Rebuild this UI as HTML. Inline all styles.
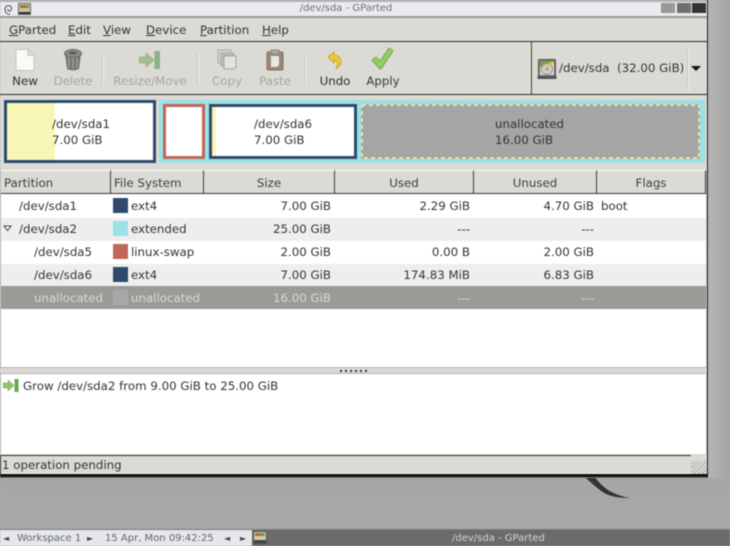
<!DOCTYPE html>
<html><head><meta charset="utf-8">
<style>
html,body{margin:0;padding:0;width:730px;height:546px;overflow:hidden;background:#a8a8a8;}
#p{position:relative;width:730px;height:546px;overflow:hidden;font-family:"DejaVu Sans",sans-serif;font-size:11.8px;color:#333331;filter:blur(0.5px);background:linear-gradient(#9a9a9a,#a9a9a9);}
.a{position:absolute;}
.t{position:absolute;white-space:nowrap;line-height:16px;}
.r{text-align:right;}
.c{text-align:center;}
u{text-decoration:underline;}
.d{color:#a5a5a0;}
.h{position:absolute;top:170px;height:24px;background:#dcdad5;border-right:1px solid #3a3a38;box-sizing:border-box;line-height:25px;text-align:center;color:#3f3f3d;border-top:1px solid #fff;box-shadow:inset 0 -1px 0 #3a3a38;}
.s{position:absolute;width:15px;height:15px;}
.sep{position:absolute;top:53px;height:32px;width:1px;background:#c6c4bf;border-right:1px solid #f2f1ee;}
</style></head><body><div id="p">

<!-- desktop swoosh -->
<svg class="a" style="left:580px;top:470px" width="60" height="35"><path d="M5 7 L15 7 Q26 24 50 28 Q30 28.5 20 20 Q11 13 5 7Z" fill="#333"/></svg>

<!-- window -->
<div class="a" style="left:0;top:0;width:708px;height:477px;background:#dcdad5;"></div>
<div class="a" style="left:707px;top:0;width:1px;height:477px;background:#1e1e1e;"></div>
<div class="a" style="left:708px;top:0;width:22px;height:478px;background:linear-gradient(90deg,#b5b5b5,#a5a5a5);"></div>
<div class="a" style="left:0;top:474px;width:708px;height:3px;background:#111;"></div>
<div class="a" style="left:0;top:477px;width:708px;height:1px;background:#777;"></div>

<!-- title bar -->
<div class="a" style="left:0;top:0;width:707px;height:2px;background:#b4b4b6;"></div>
<div class="a" style="left:0;top:2px;width:707px;height:14px;background:#e9eaef;"></div>
<div class="a" style="left:0;top:16px;width:707px;height:2px;background:#9b9b9b;"></div>
<svg class="a" style="left:2px;top:3px" width="12" height="13"><path d="M8 11.5 C4 11 2.5 8 3 5.5 C3.5 3 6 2 8 3 C10 4 10 7 8 8 C6.5 8.5 5.5 7.5 6 6" fill="none" stroke="#555" stroke-width="1"/></svg>
<svg class="a" style="left:18px;top:3px" width="13" height="12"><rect x="0" y="0" width="13" height="12" fill="#666"/><rect x="1" y="1" width="11" height="8" fill="#c9c7a0"/><rect x="2" y="2" width="5" height="3" fill="#c0603c"/><rect x="7" y="2" width="4" height="3" fill="#6a9a55"/><rect x="1" y="9" width="11" height="2" fill="#333"/></svg>
<div class="t c" style="left:0;top:1px;width:692px;font-size:10px;line-height:15px;color:#6e7072;">/dev/sda - GParted</div>
<div class="a" style="left:661px;top:3px;width:14px;height:10px;background:#989898;"></div>
<div class="a" style="left:677px;top:3px;width:14px;height:10px;background:#6e6e6e;"></div>
<div class="a" style="left:692px;top:3px;width:14px;height:10px;background:#333;"></div>

<!-- menu -->
<div class="a" style="left:0;top:41px;width:707px;height:1px;background:#2d2d2b;"></div>
<div class="t" style="left:9px;top:22px;"><u>G</u>Parted</div>
<div class="t" style="left:68px;top:22px;"><u>E</u>dit</div>
<div class="t" style="left:103px;top:22px;"><u>V</u>iew</div>
<div class="t" style="left:146px;top:22px;"><u>D</u>evice</div>
<div class="t" style="left:200px;top:22px;"><u>P</u>artition</div>
<div class="t" style="left:262px;top:22px;"><u>H</u>elp</div>

<!-- toolbar -->
<div class="a" style="left:0;top:94px;width:707px;height:1px;background:#2d2d2b;"></div>
<div class="a" style="left:531px;top:42px;width:1px;height:52px;background:#3a3a38;"></div>

<svg class="a" style="left:14px;top:48px" width="22" height="24"><path d="M2 1.5 H14 L20 7.5 V21 Q20 22.5 18.5 22.5 H3.5 Q2 22.5 2 21Z" fill="#f9f9f7" stroke="#c4c4bf"/><path d="M14 1.5 V7.5 H20" fill="#dededa" stroke="#c4c4bf"/></svg>
<div class="t c" style="left:5px;top:73px;width:40px;color:#2e2e2c;">New</div>

<svg class="a" style="left:62px;top:48px" width="22" height="24"><path d="M3 6 L5 21 Q11 24 17 21 L19 6Z" fill="#767672"/><path d="M7 9 V20 M11 9 V21 M15 9 V20" stroke="#a5a5a0" stroke-width="1.2"/><ellipse cx="11" cy="5.5" rx="8.5" ry="4" fill="#8a8a8a" stroke="#6a6a66"/><ellipse cx="11" cy="5" rx="4" ry="1.6" fill="#5e5e5a"/></svg>
<div class="t c d" style="left:48px;top:73px;width:50px;">Delete</div>

<div class="sep" style="left:102px;"></div>

<svg class="a" style="left:139px;top:50px" width="22" height="20"><path d="M0 7 H7 V3 L15 10 L7 17 V13 H0Z" fill="#a3bd95" stroke="#8aa47c" stroke-width=".6"/><rect x="15.5" y="1" width="5.5" height="18" fill="#8eb184"/></svg>
<div class="t c d" style="left:105px;top:73px;width:90px;">Resize/Move</div>

<div class="sep" style="left:197px;"></div>

<svg class="a" style="left:217px;top:49px" width="21" height="22"><rect x="1" y="1" width="13" height="13" fill="#d2d2ce" stroke="#aaa"/><rect x="4" y="4" width="13" height="13" fill="#bdbdb9" stroke="#aaa"/><path d="M7 7 H19 V18 L16 20 H7Z" fill="#e3e3e0" stroke="#a0a09c"/></svg>
<div class="t c d" style="left:207px;top:73px;width:40px;">Copy</div>

<svg class="a" style="left:266px;top:49px" width="19" height="22"><rect x="1" y="3" width="16" height="18" rx="1.5" fill="#9d8878" stroke="#85705f"/><rect x="5" y="1" width="8" height="4" fill="#a8a8a4" stroke="#888"/><path d="M5 7 H13 V16 L11 18 H5Z" fill="#e8e8e5"/></svg>
<div class="t c d" style="left:255px;top:73px;width:40px;">Paste</div>

<div class="sep" style="left:304px;"></div>

<svg class="a" style="left:327px;top:51px" width="16" height="19"><path d="M1 6 L7 1 V4 Q14 5 14 11 Q14 15 9 18 Q11 13 10 11 Q9 9 7 9 V12Z" fill="#edc92f" stroke="#c8a215" stroke-width=".8"/></svg>
<div class="t c" style="left:315px;top:73px;width:40px;color:#2e2e2c;">Undo</div>

<svg class="a" style="left:371px;top:47px" width="23" height="24"><path d="M1 13 L5 10 L9 14 L18 1 L22 4 L10 22 Q8 22 7 20Z" fill="#90cd64" stroke="#74a94f"/></svg>
<div class="t c" style="left:363px;top:73px;width:40px;color:#3a3a38;">Apply</div>

<!-- device combo -->
<svg class="a" style="left:537px;top:59px" width="20" height="21"><rect x="1.5" y="0.5" width="17" height="18" rx="1" fill="#777" stroke="#555"/><rect x="3" y="2" width="14" height="14" fill="#d8d8cc"/><path d="M3 2 H17 V4 L12 4 L9 7 L3 8Z" fill="#6fa54a"/><circle cx="10" cy="10" r="5.5" fill="#cfcfc6" stroke="#999"/><circle cx="10" cy="10" r="1.5" fill="#999"/><path d="M10 8 L16 2.5" stroke="#e8c42a" stroke-width="1.6"/><rect x="0.5" y="17" width="19" height="3" fill="#555"/></svg>
<div class="t" style="left:559px;top:60px;">/dev/sda&nbsp; (32.00 GiB)</div>
<div class="a" style="left:687px;top:46px;width:1px;height:45px;background:#c6c4bf;border-right:1px solid #f2f1ee;"></div>
<div class="a" style="left:691px;top:66px;width:0;height:0;border-left:5px solid transparent;border-right:5px solid transparent;border-top:5px solid #111;"></div>

<!-- partition visual -->
<div class="a" style="left:4px;top:100px;width:152px;height:63px;box-sizing:border-box;border:3px solid #2f4a6d;background:#fff;outline:1px solid #dcdad5;"></div>
<div class="a" style="left:7px;top:103px;width:48px;height:57px;background:#f8f6b4;"></div>
<div class="t" style="left:52px;top:116px;">/dev/sda1</div>
<div class="t" style="left:52px;top:132px;">7.00 GiB</div>

<div class="a" style="left:159px;top:100px;width:546px;height:63px;background:#9ae2e5;"></div>
<div class="a" style="left:163px;top:104px;width:42px;height:55px;box-sizing:border-box;border:3px solid #c1665a;background:#fff;"></div>
<div class="a" style="left:209px;top:104px;width:148px;height:55px;box-sizing:border-box;border:3px solid #2f4a6d;background:#fff;"></div>
<div class="a" style="left:212px;top:107px;width:4px;height:49px;background:#f8f6b4;"></div>
<div class="t" style="left:254px;top:116px;">/dev/sda6</div>
<div class="t" style="left:254px;top:132px;">7.00 GiB</div>
<div class="a" style="left:361px;top:104px;width:339px;height:55px;background:#a5a5a5;"></div>
<svg class="a" style="left:361px;top:104px" width="339" height="55"><rect x="1" y="1" width="337" height="53" fill="none" stroke="#f6f3a8" stroke-width="1.5" stroke-dasharray="4 3"/></svg>
<div class="t" style="left:495px;top:116px;">unallocated</div>
<div class="t" style="left:495px;top:132px;">16.00 GiB</div>

<!-- tree -->
<div class="h" style="left:1px;width:110px;text-align:left;padding-left:3px;">Partition</div>
<div class="h" style="left:111px;width:93px;text-align:left;padding-left:3px;">File System</div>
<div class="h" style="left:204px;width:131px;">Size</div>
<div class="h" style="left:335px;width:139px;">Used</div>
<div class="h" style="left:474px;width:123px;">Unused</div>
<div class="h" style="left:597px;width:109px;">Flags</div>

<div class="a" style="left:1px;top:194px;width:705px;height:173px;background:#fff;"></div>
<div class="a" style="left:1px;top:218px;width:705px;height:23px;background:#eeeeee;"></div>
<div class="a" style="left:1px;top:264px;width:705px;height:22px;background:#eeeeee;"></div>
<div class="a" style="left:1px;top:286px;width:705px;height:23px;background:#9c9a94;"></div>
<div class="a" style="left:0;top:170px;width:1px;height:284px;background:#c4c4c0;"></div>
<div class="a" style="left:706px;top:170px;width:1px;height:284px;background:#c4c4c0;"></div>

<div class="s" style="left:113px;top:198px;background:#2f4a6d;"></div>
<div class="s" style="left:113px;top:221px;background:#9ae2e5;"></div>
<div class="s" style="left:113px;top:244px;background:#c1665a;"></div>
<div class="s" style="left:113px;top:267px;background:#2f4a6d;"></div>
<div class="s" style="left:113px;top:290px;background:#a8a8a8;"></div>
<svg class="a" style="left:3px;top:225px" width="9" height="7"><path d="M1 1 H8 L4.5 5.5Z" fill="#fff" stroke="#444"/></svg>

<div class="t" style="left:19px;top:198px;">/dev/sda1</div>
<div class="t" style="left:131px;top:198px;">ext4</div>
<div class="t r" style="left:211px;top:198px;width:120px;">7.00 GiB</div>
<div class="t r" style="left:340px;top:198px;width:130px;">2.29 GiB</div>
<div class="t r" style="left:464px;top:198px;width:130px;">4.70 GiB</div>
<div class="t" style="left:601px;top:198px;">boot</div>

<div class="t" style="left:19px;top:221px;">/dev/sda2</div>
<div class="t" style="left:131px;top:221px;">extended</div>
<div class="t r" style="left:211px;top:221px;width:120px;">25.00 GiB</div>
<div class="t r" style="left:340px;top:221px;width:130px;">---</div>
<div class="t r" style="left:464px;top:221px;width:130px;">---</div>

<div class="t" style="left:34px;top:244px;">/dev/sda5</div>
<div class="t" style="left:131px;top:244px;">linux-swap</div>
<div class="t r" style="left:211px;top:244px;width:120px;">2.00 GiB</div>
<div class="t r" style="left:340px;top:244px;width:130px;">0.00 B</div>
<div class="t r" style="left:464px;top:244px;width:130px;">2.00 GiB</div>

<div class="t" style="left:34px;top:267px;">/dev/sda6</div>
<div class="t" style="left:131px;top:267px;">ext4</div>
<div class="t r" style="left:211px;top:267px;width:120px;">7.00 GiB</div>
<div class="t r" style="left:340px;top:267px;width:130px;">174.83 MiB</div>
<div class="t r" style="left:464px;top:267px;width:130px;">6.83 GiB</div>

<div class="t" style="left:34px;top:290px;color:#dcdad5;">unallocated</div>
<div class="t" style="left:131px;top:290px;color:#dcdad5;">unallocated</div>
<div class="t r" style="left:211px;top:290px;width:120px;color:#dcdad5;">16.00 GiB</div>
<div class="t r" style="left:340px;top:290px;width:130px;color:#dcdad5;">---</div>
<div class="t r" style="left:464px;top:290px;width:130px;color:#dcdad5;">---</div>

<!-- pane handle -->
<div class="a" style="left:0;top:367px;width:707px;height:1px;background:#b5b5b1;"></div>
<div class="a" style="left:0;top:368px;width:707px;height:5px;background:#dcdad5;"></div>
<div class="a" style="left:340px;top:370px;width:30px;height:2px;background:repeating-linear-gradient(90deg,#333 0 2px,transparent 2px 5px);"></div>
<div class="a" style="left:0;top:373px;width:707px;height:1px;background:#b5b5b1;"></div>

<!-- log -->
<div class="a" style="left:1px;top:374px;width:705px;height:80px;background:#fff;"></div>
<svg class="a" style="left:3px;top:378px" width="16" height="15"><path d="M0 5 H5 V2 L11 7.5 L5 13 V10 H0Z" fill="#93c46b" stroke="#6f9f4c" stroke-width=".5"/><rect x="11.5" y="1" width="4" height="13" fill="#6fa552"/></svg>
<div class="t" style="left:23px;top:378px;">Grow /dev/sda2 from 9.00 GiB to 25.00 GiB</div>

<!-- status -->
<div class="a" style="left:0;top:455px;width:691px;height:1px;background:#2d2d2b;"></div>
<div class="a" style="left:0;top:456px;width:691px;height:17px;background:#dcdad5;border-bottom:1px solid #f4f3f0;"></div>
<div class="a" style="left:0;top:456px;width:1px;height:18px;background:#333;"></div>
<div class="t" style="left:2px;top:457px;">1 operation pending</div>
<div class="a" style="left:691px;top:456px;width:16px;height:18px;background:repeating-linear-gradient(135deg,#dcdad5 0 2px,#a9a8a3 2px 3px);"></div>
<div class="a" style="left:691px;top:456px;width:16px;height:5px;background:#dcdad5;"></div>

<!-- taskbar -->
<div class="a" style="left:0;top:529px;width:730px;height:1px;background:#7a7a7a;"></div>
<div class="a" style="left:0;top:530px;width:730px;height:16px;background:#e6e7ec;"></div>
<div class="a" style="left:252px;top:530px;width:478px;height:16px;background:#6b6b6b;"></div>
<div class="t" style="left:3px;top:531px;font-size:8px;line-height:15px;color:#444;">◄</div>
<div class="t" style="left:17px;top:531px;font-size:10px;line-height:15px;color:#5f6672;">Workspace 1</div>
<div class="t" style="left:87px;top:531px;font-size:8px;line-height:15px;color:#444;">►</div>
<div class="t" style="left:105px;top:531px;font-size:10px;line-height:15px;color:#5f6672;">15 Apr, Mon 09:42:25</div>
<div class="t" style="left:224px;top:531px;font-size:8px;line-height:15px;color:#444;">◄</div>
<div class="t" style="left:240px;top:531px;font-size:8px;line-height:15px;color:#444;">►</div>
<svg class="a" style="left:253px;top:531px" width="14" height="13"><rect x="0.5" y="0.5" width="13" height="12" fill="#cfcdb0" stroke="#555"/><rect x="2" y="2" width="5" height="3" fill="#c0603c"/><rect x="7" y="2" width="5" height="3" fill="#6a9a55"/><rect x="1" y="9" width="12" height="3" fill="#444"/></svg>
<div class="t" style="left:452px;top:531px;font-size:10px;line-height:15px;color:#d4d4d4;">/dev/sda - GParted</div>

</div></body></html>
